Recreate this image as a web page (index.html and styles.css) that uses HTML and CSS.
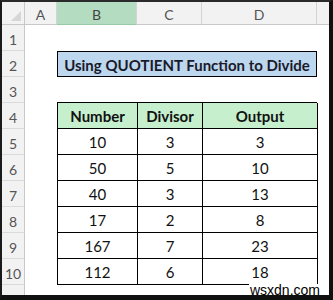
FILE: index.html
```html
<!DOCTYPE html>
<html>
<head>
<meta charset="utf-8">
<link rel="stylesheet" href="styles.css">
</head>
<body>
<div class="frame">
  <div class="sheet">
    <div class="corner"><span class="tri"></span></div>
    <div class="colhead">A</div>
    <div class="colhead sel">B</div>
    <div class="colhead">C</div>
    <div class="colhead">D</div>
    <div class="colhead last"></div>

    <div class="rowhead r1">1</div>
    <div class="rowhead r2">2</div>
    <div class="rowhead r3">3</div>
    <div class="rowhead r4">4</div>
    <div class="rowhead r5">5</div>
    <div class="rowhead r6">6</div>
    <div class="rowhead r7">7</div>
    <div class="rowhead r8">8</div>
    <div class="rowhead r9">9</div>
    <div class="rowhead r10">10</div>
    <div class="rowhead r11"></div>

    <div class="title">Using QUOTIENT Function to Divide</div>

    <div class="table">
      <div class="th">Number</div><div class="th">Divisor</div><div class="th">Output</div>
      <div class="td">10</div><div class="td">3</div><div class="td">3</div>
      <div class="td">50</div><div class="td">5</div><div class="td">10</div>
      <div class="td">40</div><div class="td">3</div><div class="td">13</div>
      <div class="td">17</div><div class="td">2</div><div class="td">8</div>
      <div class="td">167</div><div class="td">7</div><div class="td">23</div>
      <div class="td">112</div><div class="td">6</div><div class="td">18</div>
    </div>
  </div>
  <div class="watermark">wsxdn.com</div>
</div>
</body>
</html>
```

FILE: styles.css
```css
* { box-sizing: border-box; }
html, body { margin: 0; padding: 0; background: #fff; }
.frame {
  position: relative;
  width: 333px;
  height: 300px;
  border-top: 2px solid #2a2a2a;
  border-left: 2px solid #1a1a1a;
  border-right: 4px solid #111;
  border-bottom: 5px solid #111;
  overflow: hidden;
  font-family: Lato, "Liberation Sans", sans-serif;
}
.sheet {
  display: grid;
  grid-template-columns: 23px 32px 80px 65px 115px 12px;
  grid-template-rows: 23px repeat(10, 26px) 1fr;
  height: 100%;
  background: #fff;
}
.corner {
  grid-row: 1; grid-column: 1;
  background: #f2f2f2;
  border-right: 1px solid #c8c8c8;
  border-bottom: 1px solid #c8c8c8;
  position: relative;
}
.tri {
  position: absolute;
  right: 3px; bottom: 3px;
  width: 0; height: 0;
  border-left: 10px solid transparent;
  border-bottom: 10px solid #d6d6d6;
}
.colhead {
  grid-row: 1;
  background: #f2f2f2;
  border-right: 1px solid #d4d4d4;
  border-bottom: 1px solid #c8c8c8;
  color: #555;
  font-size: 14px;
  display: flex;
  align-items: center;
  justify-content: center;
  padding-top: 2px;
}
.colhead.sel {
  background: #b3dcc0;
  border-bottom: 1px solid #9ac9a8;
  color: #444;
}
.colhead.last { border-right: none; }
.rowhead {
  grid-column: 1;
  background: #f2f2f2;
  border-right: 1px solid #c8c8c8;
  border-bottom: 1px solid #dadada;
  color: #555;
  font-size: 14px;
  display: flex;
  align-items: center;
  justify-content: center;
  padding-top: 3px;
}
.r1 { grid-row: 2; } .r2 { grid-row: 3; } .r3 { grid-row: 4; } .r4 { grid-row: 5; }
.r5 { grid-row: 6; } .r6 { grid-row: 7; } .r7 { grid-row: 8; } .r8 { grid-row: 9; }
.r9 { grid-row: 10; } .r10 { grid-row: 11; }
.r11 { grid-row: 12; border-bottom: none; }

.title {
  grid-row: 3;
  grid-column: 3 / 6;
  background: #bdd7ee;
  border: 1px solid #000;
  display: flex;
  align-items: center;
  justify-content: center;
  font-weight: 700;
  font-size: 15px;
  color: #1a1a2a;
  padding-top: 1px;
}
.table {
  grid-row: 5 / 12;
  grid-column: 3 / 6;
  display: grid;
  grid-template-columns: 80px 65px 115px;
  grid-template-rows: repeat(7, 26px);
  border-top: 1px solid #000;
  border-left: 1px solid #000;
  margin-top: -1px;
}
.th, .td {
  border-right: 1px solid #000;
  border-bottom: 1px solid #000;
  display: flex;
  align-items: center;
  justify-content: center;
  font-size: 15px;
  color: #111;
  padding-top: 1px;
}
.th {
  background: #c6efce;
  font-weight: 700;
}
.watermark {
  position: absolute;
  right: 8px;
  bottom: -2px;
  font-family: "Liberation Sans", Arial, sans-serif;
  font-size: 14px;
  color: #000;
  background: #fff;
  line-height: 13px;
  padding: 0 1px;
}
```
